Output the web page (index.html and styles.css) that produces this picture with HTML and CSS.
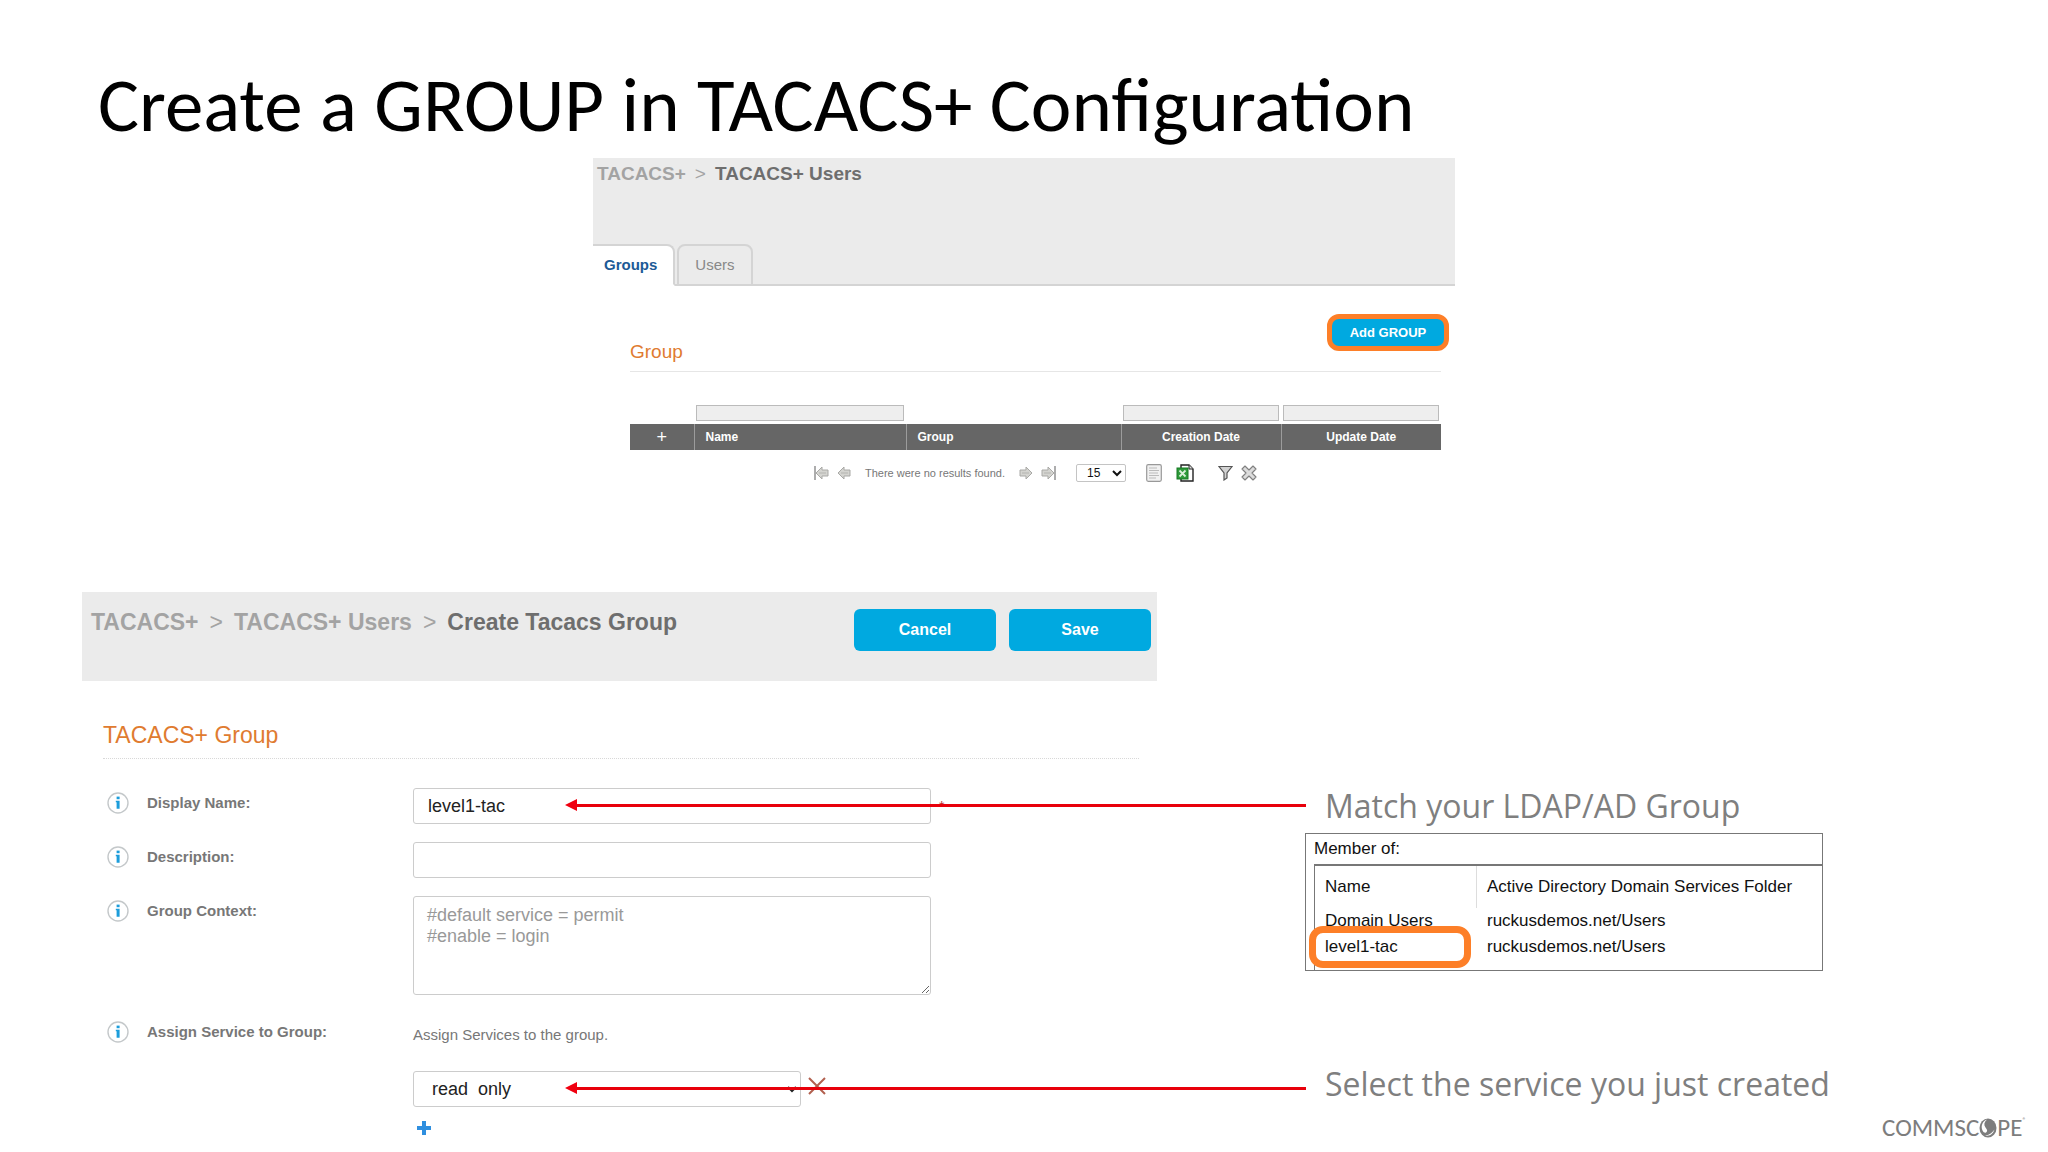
FILE: index.html
```html
<!DOCTYPE html>
<html lang="en">
<head>
    <meta charset="UTF-8">
    <meta name="viewport" content="width=device-width, initial-scale=1.0">
    <title>Create a GROUP in TACACS+ Configuration</title>
    <link rel="stylesheet" href="styles.css">
</head>
<body>
    <svg class="defs" width="0" height="0" aria-hidden="true">
        <symbol id="info" viewBox="0 0 22 22">
            <circle cx="11" cy="11" r="10" fill="#fff" stroke="#c4c8ca" stroke-width="1.4"/>
            <rect x="9.6" y="4.6" width="3" height="2.6" fill="#1c9ddb"/>
            <path d="M8.8 8.8h3.8v8h-3v-6.6h-.8z" fill="#1c9ddb"/>
        </symbol>
        <symbol id="arrow" viewBox="0 0 14 14">
            <path d="M1 7l6-6v3h6v6H7v3z" fill="#d4d4d0" stroke="#a9a9a6" stroke-width="1"/>
            <path d="M4 7h7" stroke="#b4b4b0"/>
        </symbol>
    </svg>

    <h1>Create a GROUP in TACACS+ Configuration</h1>

    <section class="users-panel">
        <header class="users-header">
            <nav class="crumbs">
                <a href="#">TACACS+</a><span>&gt;</span><strong>TACACS+ Users</strong>
            </nav>
            <nav class="tabs">
                <a class="tab active" href="#">Groups</a>
                <a class="tab" href="#">Users</a>
            </nav>
        </header>
        <div class="users-body">
            <div class="group-title">
                <h2>Group</h2>
                <button type="button" class="add-group">Add GROUP</button>
            </div>
            <table class="group-table">
                <colgroup>
                    <col class="col-add">
                    <col class="col-name">
                    <col class="col-group">
                    <col class="col-date">
                    <col class="col-date">
                </colgroup>
                <thead>
                    <tr class="filters">
                        <td></td>
                        <td><input type="text" aria-label="Filter by name"></td>
                        <td></td>
                        <td><input type="text" aria-label="Filter by creation date"></td>
                        <td><input type="text" aria-label="Filter by update date"></td>
                    </tr>
                    <tr class="headings">
                        <th class="add">+</th>
                        <th>Name</th>
                        <th>Group</th>
                        <th class="date">Creation Date</th>
                        <th class="date">Update Date</th>
                    </tr>
                </thead>
            </table>
            <div class="pager">
                <div class="pager-nav">
                    <button type="button" aria-label="First page">
                        <svg width="15" height="14" viewBox="0 0 15 14"><path d="M1 0v14" stroke="#999" stroke-width="1.6"/><use href="#arrow" x="1" width="14" height="14"/></svg>
                    </button>
                    <button type="button" aria-label="Previous page">
                        <svg width="14" height="14"><use href="#arrow" width="14" height="14"/></svg>
                    </button>
                </div>
                <span>There were no results found.</span>
                <div class="pager-nav">
                    <button type="button" aria-label="Next page">
                        <svg width="14" height="14"><use href="#arrow" width="14" height="14" transform="rotate(180 7 7)"/></svg>
                    </button>
                    <button type="button" aria-label="Last page">
                        <svg width="15" height="14" viewBox="0 0 15 14"><path d="M14 0v14" stroke="#999" stroke-width="1.6"/><use href="#arrow" width="14" height="14" transform="rotate(180 7 7)"/></svg>
                    </button>
                </div>
                <select class="page-size" aria-label="Rows per page">
                    <option>15</option>
                </select>
                <div class="pager-tools">
                    <button type="button" aria-label="Show log">
                        <svg width="16" height="18" viewBox="0 0 16 18"><rect x=".7" y=".7" width="14.6" height="16.6" rx="1.5" fill="#f1f1f1" stroke="#999" stroke-width="1.2"/><path d="M3 4h8M3 6.5h10M3 9h9M3 11.5h10M3 14h7" stroke="#bbb"/></svg>
                    </button>
                    <button type="button" aria-label="Export to Excel">
                        <svg width="18" height="18" viewBox="0 0 18 18"><path d="M5 1h8l4 4v12H5z" fill="#fff" stroke="#222" stroke-width="1.4"/><path d="M13 1v4h4" fill="#ddd" stroke="#222"/><rect x="1" y="4" width="11" height="11" fill="#2e9a3a" stroke="#157a22"/><path d="M3.5 6.5l6 6M9.5 6.5l-6 6" stroke="#d9f0d9" stroke-width="1.8"/></svg>
                    </button>
                </div>
                <div class="pager-nav">
                    <button type="button" aria-label="Filter">
                        <svg width="15" height="16" viewBox="0 0 15 16"><path d="M1 1.5h13L9 8v5l-3 2V8z" fill="#d2d2d2" stroke="#555" stroke-width="1.2"/></svg>
                    </button>
                    <button type="button" aria-label="Clear filter">
                        <svg width="16" height="16" viewBox="0 0 16 16"><path d="M4 1l4 4 4-4 3 3-4 4 4 4-3 3-4-4-4 4-3-3 4-4-4-4z" fill="#dcdcdc" stroke="#808080" stroke-width="1.1" stroke-linejoin="round"/></svg>
                    </button>
                </div>
            </div>
        </div>
    </section>

    <div class="lower">
        <form class="group-form">
            <header class="form-header">
                <nav class="crumbs">
                    <a href="#">TACACS+</a><span>&gt;</span><a href="#">TACACS+ Users</a><span>&gt;</span><strong>Create Tacacs Group</strong>
                </nav>
                <div class="form-actions">
                    <button type="button">Cancel</button>
                    <button type="submit">Save</button>
                </div>
            </header>
            <h2>TACACS+ Group</h2>
            <div class="fields">
                <svg class="info"><use href="#info"/></svg>
                <label for="displayName">Display Name:</label>
                <div class="field pointed">
                    <input type="text" id="displayName" value="level1-tac" required>
                    <span class="required">*</span>
                </div>

                <svg class="info"><use href="#info"/></svg>
                <label for="description">Description:</label>
                <div class="field">
                    <input type="text" id="description">
                </div>

                <svg class="info"><use href="#info"/></svg>
                <label for="groupContext">Group Context:</label>
                <div class="field context">
                    <textarea id="groupContext" placeholder="#default service = permit&#10;#enable = login"></textarea>
                </div>

                <svg class="info"><use href="#info"/></svg>
                <label for="service">Assign Service to Group:</label>
                <div class="assign">
                    <p>Assign Services to the group.</p>
                    <div class="service-row pointed">
                        <select id="service">
                            <option>read&nbsp; only</option>
                        </select>
                        <button type="button" class="icon-button" aria-label="Remove service">
                            <svg width="18" height="18" viewBox="0 0 18 18"><path d="M1 1l16 16M17 1L1 17" stroke="#b2604f" stroke-width="2"/></svg>
                        </button>
                    </div>
                    <button type="button" class="icon-button add-service" aria-label="Add service">
                        <svg width="14" height="14" viewBox="0 0 14 14"><path d="M5 0h4v5h5v4H9v5H5V9H0V5h5z" fill="#2f8fdf"/></svg>
                    </button>
                </div>
            </div>
        </form>

        <aside class="notes">
            <p class="note">Match your LDAP/AD Group</p>
            <div class="member-of">
                <h3>Member of:</h3>
                <table class="members">
                    <thead>
                        <tr>
                            <th>Name</th>
                            <th>Active Directory Domain Services Folder</th>
                        </tr>
                    </thead>
                    <tbody>
                        <tr>
                            <td>Domain Users</td>
                            <td>ruckusdemos.net/Users</td>
                        </tr>
                        <tr>
                            <td class="marked">level1-tac</td>
                            <td>ruckusdemos.net/Users</td>
                        </tr>
                    </tbody>
                </table>
            </div>
            <p class="note">Select the service you just created</p>
            <div class="logo">
                <span>COMMSC</span>
                <svg width="18" height="20" viewBox="0 0 18 20"><ellipse cx="9" cy="10" rx="8.5" ry="9.5" fill="#7d7d7d"/><path d="M8 1.5C5 4 4.500 7 6.500 9.500c1.500 2 2.500 3.500.5 5-1 .5-2.500 0-3.500-2C1.500 8 3.500 3 8 1.500z" fill="#fff"/><path d="M6 18c5 0 8-2 9.500-6.500-1.500 2.500-4.500 5-9.500 6.500z" fill="#fff"/></svg>
                <span>PE</span><sup>&reg;</sup>
            </div>
        </aside>
    </div>
</body>
</html>
```

FILE: styles.css
```css
* {
    box-sizing: border-box;
}

body {
    display: flex;
    flex-direction: column;
    min-height: 100vh;
    margin: 0;
    font-family: "Liberation Sans", Arial, sans-serif;
    color: #777;
    background: #fff;
}

h1, h2, h3, p {
    margin: 0;
    font-weight: normal;
}

a {
    color: inherit;
    text-decoration: none;
}

button, input, select, textarea {
    font-family: inherit;
}

button {
    padding: 0;
    border: none;
    background: none;
    cursor: pointer;
}

svg {
    display: block;
}

.defs {
    position: absolute;
}

h1 {
    padding: 63px 98px 11px;
    font-family: Carlito, Lato, sans-serif;
    font-size: 77px;
    line-height: 84px;
    color: #000;
}

h2 {
    color: #e07b30;
}

.crumbs {
    display: flex;
    gap: 9px;
    font-weight: bold;
    color: #a3a3a3;
}

.crumbs span {
    font-weight: normal;
}

.crumbs strong {
    color: #6e6e6e;
}

/* users list */
.users-panel {
    width: 100%;
    max-width: 862px;
    margin: 0 auto;
}

.users-header {
    display: flex;
    flex-direction: column;
    justify-content: space-between;
    height: 128px;
    border-bottom: 2px solid #d4d4d4;
    background: #ebebeb;
}

.users-header .crumbs {
    padding: 4px;
    font-size: 19px;
    line-height: 24px;
}

.tabs {
    display: flex;
    gap: 2px;
    margin-bottom: -2px;
}

.tab {
    padding: 0 16px;
    border: 2px solid #d4d4d4;
    border-radius: 8px 8px 0 0;
    font-size: 15px;
    line-height: 38px;
    color: #888;
}

.tab.active {
    padding-left: 11px;
    border-left: none;
    border-bottom-color: #fff;
    border-top-left-radius: 0;
    font-weight: bold;
    color: #1c5a96;
    background: #fff;
}

.users-body {
    padding: 28px 14px 0 37px;
}

.group-title {
    display: flex;
    justify-content: space-between;
    align-items: flex-end;
    height: 58px;
    padding-bottom: 7px;
    border-bottom: 1px solid #e6e6e6;
}

.group-title h2 {
    font-size: 19px;
    line-height: 24px;
}

.add-group {
    align-self: flex-start;
    width: 122px;
    height: 37px;
    margin-right: -8px;
    border: 5px solid #fd7f28;
    border-radius: 12px;
    font-size: 13px;
    font-weight: bold;
    color: #fff;
    background: #00a9e0;
}

.group-table {
    width: 100%;
    margin-top: 32px;
    border-collapse: collapse;
    table-layout: fixed;
}

.col-add {
    width: 64px;
}

.col-name {
    width: 212px;
}

.col-group {
    width: 215px;
}

.filters td {
    height: 20px;
    padding: 0 2px 2px;
}

.filters input {
    display: block;
    width: 100%;
    height: 16px;
    border: 1px solid #bbb;
    background: #eee;
}

.headings th {
    height: 26px;
    padding: 0 11px;
    border-left: 1px solid #9c9c9c;
    font-size: 12px;
    text-align: left;
    color: #fff;
    background: #666;
}

.headings .add, .headings .date {
    text-align: center;
}

.headings .add {
    border-left: none;
    font-size: 18px;
    font-weight: normal;
    line-height: 20px;
}

.pager {
    display: flex;
    justify-content: center;
    align-items: center;
    gap: 14px;
    height: 18px;
    margin-top: 14px;
    font-size: 11px;
}

.pager-nav {
    display: flex;
    align-items: center;
    gap: 8px;
}

.pager-tools {
    display: flex;
    align-items: center;
    gap: 14px;
    margin-right: 10px;
}

.page-size {
    width: 50px;
    height: 18px;
    margin: 0 6px;
    padding-left: 6px;
    border: 1px solid #c4c4c4;
    border-radius: 2px;
    font-size: 12px;
    color: #111;
    background: #fff;
}

/* create group form */
.lower {
    display: flex;
    flex: 1;
    gap: 148px;
    margin-top: 110px;
    padding-left: 82px;
}

.group-form {
    flex: 0 1 1075px;
}

.form-header {
    display: flex;
    justify-content: space-between;
    align-items: flex-start;
    height: 89px;
    padding: 17px 6px 0 9px;
    background: #ebebeb;
}

.form-header .crumbs {
    gap: 11px;
    font-size: 23px;
    line-height: 26px;
}

.form-actions {
    display: flex;
    gap: 13px;
}

.form-actions button {
    width: 142px;
    height: 42px;
    border-radius: 6px;
    font-size: 16px;
    font-weight: bold;
    color: #fff;
    background: #00a9e0;
}

.group-form h2 {
    margin: 40px 18px 0 21px;
    padding-bottom: 9px;
    border-bottom: 1px dotted #d8d8d8;
    font-size: 23px;
    line-height: 28px;
}

.fields {
    display: grid;
    grid-template-columns: 22px 248px 1fr;
    gap: 18px;
    padding: 29px 0 0 25px;
}

.info {
    width: 22px;
    height: 22px;
    margin-top: 4px;
}

.fields label {
    margin-top: 5px;
    font-size: 15px;
    font-weight: bold;
    line-height: 20px;
}

.field {
    display: flex;
    align-items: center;
    gap: 8px;
}

.fields input, .fields textarea {
    width: 518px;
    padding: 0 14px;
    border: 1px solid #ccc;
    border-radius: 3px;
    font-size: 18px;
    color: #222;
}

.fields input {
    height: 36px;
}

.fields .context {
    margin-bottom: 4px;
}

.fields textarea {
    height: 99px;
    padding: 8px 13px;
    line-height: 21px;
}

.fields textarea::placeholder {
    color: #999;
}

.required {
    font-size: 14px;
    color: #b33;
}

.assign p {
    padding-top: 8px;
    font-size: 15px;
    line-height: 20px;
}

.service-row {
    display: flex;
    gap: 7px;
    margin-top: 26px;
}

.service-row select {
    width: 388px;
    height: 36px;
    padding: 0 8px 0 14px;
    border: 1px solid #ccc;
    border-radius: 3px;
    font-size: 18px;
    color: #222;
    background: #fff;
}

.service-row .icon-button {
    align-self: flex-start;
    margin-top: 6px;
}

.add-service {
    margin: 14px 0 0 4px;
}

/* red arrow from a note on the right to its field */
.pointed {
    position: relative;
}

.pointed::before {
    content: "";
    position: absolute;
    top: calc(50% - 2px);
    left: 162px;
    width: 731px;
    height: 3px;
    background: #e8000b;
}

.pointed::after {
    content: "";
    position: absolute;
    top: calc(50% - 7px);
    left: 152px;
    border: solid transparent;
    border-width: 6px 12px 6px 0;
    border-right-color: #f00010;
}

.notes {
    display: flex;
    flex: 1;
    flex-direction: column;
    align-items: flex-start;
    padding: 192px 22px 12px 0;
}

.note {
    padding-left: 20px;
    font-family: "Open Sans", "Noto Sans", sans-serif;
    font-size: 32px;
    line-height: 44px;
    color: #7f7f7f;
}

.member-of {
    width: 518px;
    height: 138px;
    margin: 5px 0 91px;
    padding-left: 8px;
    border: 1px solid #777;
    color: #111;
}

.member-of h3 {
    font-size: 17px;
    line-height: 30px;
}

.members {
    width: 100%;
    height: 106px;
    border: solid #777;
    border-width: 2px 0 0 1px;
    border-spacing: 0;
    font-size: 17px;
}

.members th {
    height: 42px;
    padding: 0 10px;
    font-weight: normal;
    text-align: left;
}

.members th:first-child {
    width: 162px;
    border-right: 1px solid #ddd;
}

.members td {
    height: 26px;
    padding: 0 10px;
}

.members tr:last-child .marked, .members .marked + td {
    height: 36px;
    padding-bottom: 10px;
}

.marked {
    position: relative;
}

.marked::after {
    content: "";
    box-sizing: border-box;
    position: absolute;
    top: -8px;
    left: -6px;
    width: 162px;
    height: 42px;
    border: 7px solid #fd7f28;
    border-radius: 14px;
}

.logo {
    display: flex;
    align-items: center;
    align-self: flex-end;
    margin-top: auto;
    font-family: Carlito, Lato, sans-serif;
    font-size: 25px;
    line-height: 24px;
    color: #7d7d7d;
}

.logo sup {
    align-self: flex-start;
    font-size: 7px;
    line-height: 10px;
}
```
